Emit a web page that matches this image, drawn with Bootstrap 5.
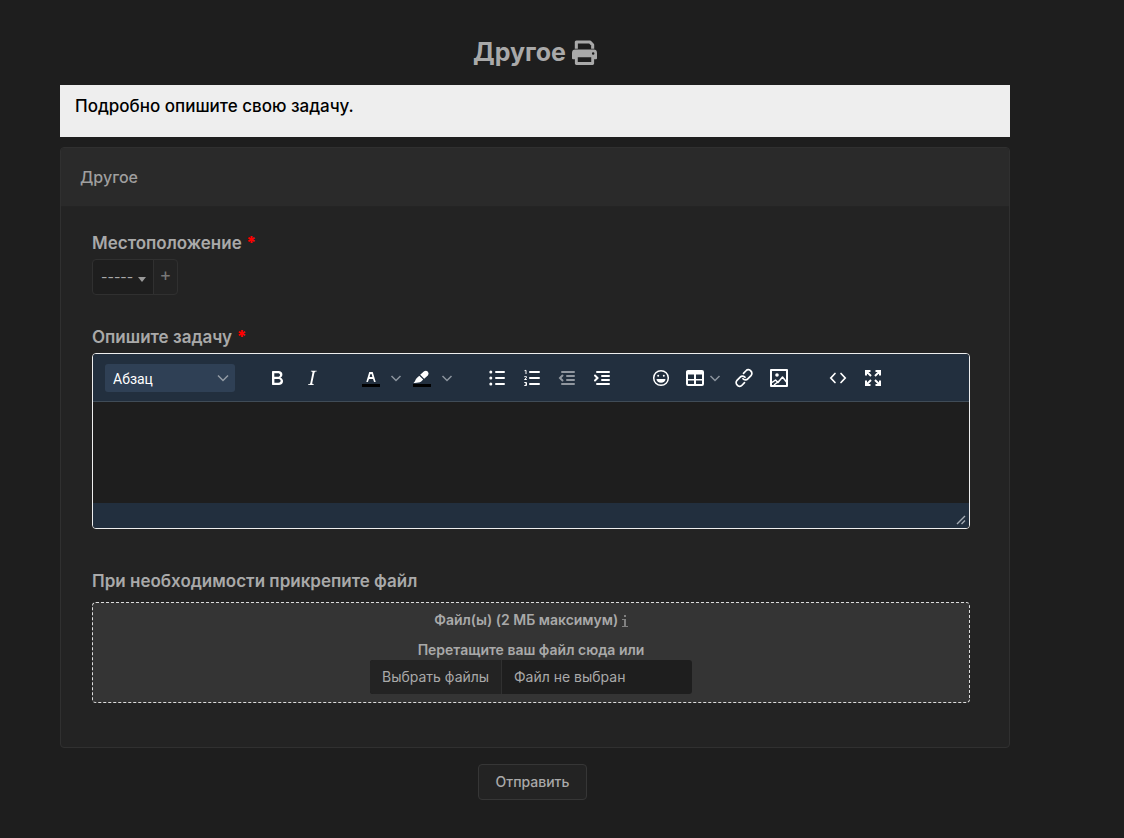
<!DOCTYPE html>
<html lang="ru" data-bs-theme="dark">
<head>
<meta charset="utf-8">
<meta name="viewport" content="width=device-width, initial-scale=1">
<title>Другое</title>
<link href="https://cdn.jsdelivr.net/npm/bootstrap@5.3.0/dist/css/bootstrap.min.css" rel="stylesheet">
<style>
body{background:#1e1e1e;color:#a9a9a9;font-family:Inter,"Liberation Sans",sans-serif;font-size:14px;line-height:20px}
.page-wrap{padding:36px 114px 36px 60px}
.page-title{color:#a9a9a9;font-size:25px;line-height:32px;font-weight:700;gap:6px;margin-bottom:17px}
.intro{background:#eee;color:#000;font-size:17px;line-height:24px;font-weight:500;padding:9px 15px 19px;margin-bottom:10px}
.form-card{--bs-card-bg:#232323;--bs-card-cap-bg:#2a2a2a;--bs-card-border-color:#303030;--bs-card-border-radius:4px;--bs-card-inner-border-radius:3px;--bs-card-color:#a9a9a9}
.form-card .card-header{font-size:16px;line-height:24px;font-weight:500;padding:17px 19px;border-bottom:1px solid #242424;color:#9f9f9f}
.form-card .card-body{padding:24px 39px 44px 31px}
.field-label{display:block;font-size:17px;line-height:24px;font-weight:600;margin-bottom:4px}
.files-label{margin-bottom:9px}
.req{color:#f00;font-weight:900}
.loc{margin-bottom:30px}
.loc-select{appearance:none;width:62px;height:36px;padding:0 8px;color:#a9a9a9;font-size:14px;border:1px solid #303030;border-radius:4px 0 0 4px;background:#1e1e1e url("data:image/svg+xml,%3Csvg xmlns='http://www.w3.org/2000/svg' viewBox='0 0 8 5'%3E%3Cpath d='M0 0h8L4 5z' fill='%23999'/%3E%3C/svg%3E") no-repeat 45px 17px/8px 5px}
.loc-add{width:25px;height:36px;margin-left:-1px;padding:0 0 4px;color:#777;background:transparent;border:1px solid #303030;border-radius:0 4px 4px 0;font-size:18px;line-height:28px}
.editor{border:1px solid #eee;border-radius:4px;overflow:hidden;margin-bottom:40px}
.toolbar{background:#222f3e;border-bottom:1px solid #404c57;min-height:48px;padding:7px 12px 6px;gap:25px}
.group{display:flex;align-items:center;gap:1px}
.para{appearance:none;width:130px;height:28px;padding:2px 8px 0;border:0;border-radius:3px;color:#fff;font-family:Roboto,sans-serif;font-size:14px;background:#2f4055 url("data:image/svg+xml,%3Csvg xmlns='http://www.w3.org/2000/svg' viewBox='0 0 12 8'%3E%3Cpath d='M1 1.5l5 5 5-5' fill='none' stroke='%23939ba5' stroke-width='1.5'/%3E%3C/svg%3E") no-repeat 112px 10px/12px 8px}
.tool{width:34px;height:34px;padding:0;border:0;background:none;color:#fff;display:flex;align-items:center;justify-content:center}
.tool svg{width:24px;height:24px;display:block;flex-shrink:0}
.tool.more{width:16px;color:#8c949e;margin-left:-1px}
.tool.more svg{width:12px;height:8px}
.split-slim .tool{width:32px}
.split-slim .more{width:10px}
.split-slim{display:flex;margin-right:6px}
.tool:disabled{opacity:.5}
.edit-area{display:block;width:100%;height:101px;border:0;background:#1e1e1e;color:#ddd;resize:none;padding:12px;outline:0}
.status{background:#222f3e;height:25px;padding:0 3px 3px}
.drop{background:#343434;border:1px dashed #ddd;border-radius:4px;padding:7px 8px 8px;font-weight:600;text-align:center}
.drop-title{margin-bottom:10px}
.file-box{width:322px;height:34px;background:#1e1e1e;border-radius:3px;font-weight:400;overflow:hidden;text-align:left;line-height:34px;cursor:pointer}
.file-box .pick{background:#232323;border-right:1px solid #303030;padding:0 12px;width:132px;white-space:nowrap}
.send{--bs-btn-bg:#232323;--bs-btn-border-color:#363636;--bs-btn-color:#a9a9a9;--bs-btn-hover-bg:#2a2a2a;--bs-btn-hover-color:#ccc;font-size:14px;line-height:20px;font-weight:500;padding:7px 17px;border-radius:4px;margin:16px 5px 0 0}
</style>
</head>
<body>
<main class="page-wrap">
<h1 class="page-title d-flex justify-content-center align-items-center">Другое
<a href="#" class="text-reset d-flex" aria-label="Печать"><svg width="25" height="25" viewBox="0 0 26 26" fill="none"><path d="M4.500 9V2h14l3 3v4" stroke="currentColor" stroke-width="3.200" stroke-linejoin="round"/><path fill="currentColor" fill-rule="evenodd" d="M3.500 10h19a3.500 3.500 0 0 1 3.500 3.500V19a1 1 0 0 1-1 1h-2v4.500a1.500 1.500 0 0 1-1.500 1.500h-17A1.500 1.500 0 0 1 3 24.500V20H1a1 1 0 0 1-1-1v-5.500A3.500 3.500 0 0 1 3.500 10zM6 18v5h14v-5zM22 12.800a1.300 1.300 0 1 0 0 2.600 1.300 1.300 0 0 0 0-2.600z"/></svg></a></h1>
<div class="intro">Подробно опишите свою задачу.</div>
<form>
<section class="card form-card">
<div class="card-header">Другое</div>
<div class="card-body">
<div class="loc">
<label class="field-label" for="loc">Местоположение <span class="req">*</span></label>
<div class="d-flex"><select id="loc" class="loc-select"><option>-----</option></select><button type="button" class="loc-add" aria-label="Добавить">+</button></div>
</div>
<label class="field-label" for="task">Опишите задачу <span class="req">*</span></label>
<div class="editor">
<div class="toolbar d-flex flex-wrap align-items-center" role="toolbar">
<select class="para" aria-label="Формат"><option>Абзац</option></select>
<div class="group">
<button type="button" class="tool" aria-label="Полужирный"><svg viewBox="0 0 24 24" fill="currentColor"><path d="M7.800 19c-.3 0-.5 0-.6-.2l-.2-.5V5.700c0-.2 0-.4.2-.5l.6-.2h5c1.500 0 2.700.3 3.500 1 .7.6 1.100 1.400 1.100 2.500a3 3 0 0 1-.6 1.900c-.4.6-1 1-1.600 1.200.4.1.9.3 1.300.6s.8.7 1 1.200c.4.4.5 1 .5 1.600 0 1.300-.4 2.300-1.300 3-.8.7-2.100 1-3.800 1H7.800zm5-8.300c.6 0 1.200-.1 1.600-.5.4-.3.6-.7.6-1.300 0-1.100-.8-1.700-2.300-1.700H9.300v3.500h3.400zm.5 6c.7 0 1.300-.1 1.700-.4.4-.4.6-.9.6-1.500s-.2-1-.7-1.400c-.4-.3-1-.4-2-.4H9.400v3.800h4z"/></svg></button>
<button type="button" class="tool" aria-label="Курсив"><svg viewBox="0 0 24 24" fill="currentColor"><path d="m16.700 4.700-.1.9h-.3c-.6 0-1 0-1.400.3-.3.3-.4.6-.5 1.100l-2.100 9.800v.6c0 .5.4.8 1.400.8h.2l-.2.8H8l.2-.8h.2c1.100 0 1.800-.5 2-1.500l2-9.800.1-.5c0-.6-.4-.8-1.400-.8h-.3l.2-.9h5.800z"/></svg></button>
</div>
<div class="group">
<button type="button" class="tool" aria-label="Цвет текста"><svg viewBox="0 0 24 24" fill="currentColor"><path fill="#000" d="M3 18h18v3H3z"/><path d="M8.700 16h-.8a.5.5 0 0 1-.5-.6l2.700-9c.1-.3.3-.4.5-.4h2.800c.2 0 .4.1.5.4l2.700 9a.5.5 0 0 1-.5.6h-.8a.5.5 0 0 1-.4-.4l-.7-2.200c0-.3-.3-.4-.5-.4h-3.400c-.2 0-.4.1-.5.4l-.7 2.200c0 .3-.2.4-.4.4zm2.600-7.600-.6 2a.5.5 0 0 0 .5.6h1.600a.5.5 0 0 0 .5-.6l-.6-2c0-.3-.3-.4-.5-.4h-.4c-.2 0-.4.1-.5.4z"/></svg></button>
<button type="button" class="tool more" aria-label="Выбрать цвет текста"><svg viewBox="0 0 12 8" fill="none" stroke="currentColor" stroke-width="1.500"><path d="M1.500 2 6 6.500 10.500 2"/></svg></button>
<button type="button" class="tool" aria-label="Цвет фона"><svg viewBox="0 0 24 24" fill="currentColor"><path fill="#000" d="M3 18h18v3H3z"/><path d="M3.500 16.900c1.600-1 1.700-3.200 3.300-4.900l2.500-2.300 3.900 3.900-2 2c-1.800 1.400-4.500 1.300-7.700 1.300z"/><path d="m10.200 8.800 3.900-3.600a2.900 2.900 0 0 1 4 4l-3.900 3.600z"/></svg></button>
<button type="button" class="tool more" aria-label="Выбрать цвет фона"><svg viewBox="0 0 12 8" fill="none" stroke="currentColor" stroke-width="1.500"><path d="M1.500 2 6 6.500 10.500 2"/></svg></button>
</div>
<div class="group">
<button type="button" class="tool" aria-label="Маркированный список"><svg viewBox="0 0 24 24" fill="currentColor"><path d="M11 5h8a1 1 0 0 1 0 2h-8a1 1 0 0 1 0-2zm0 6h8a1 1 0 0 1 0 2h-8a1 1 0 0 1 0-2zm0 6h8a1 1 0 0 1 0 2h-8a1 1 0 0 1 0-2z"/><circle cx="5.800" cy="6" r="1.500"/><circle cx="5.800" cy="12" r="1.500"/><circle cx="5.800" cy="18" r="1.500"/></svg></button>
<button type="button" class="tool" aria-label="Нумерованный список"><svg viewBox="0 0 24 24" fill="currentColor"><path d="M10 5h9a1 1 0 0 1 0 2h-9a1 1 0 0 1 0-2zm0 6h9a1 1 0 0 1 0 2h-9a1 1 0 0 1 0-2zm0 6h9a1 1 0 0 1 0 2h-9a1 1 0 0 1 0-2z"/><path fill="none" stroke="currentColor" stroke-width="1" d="M4.500 4.700 6 4.300V8M4.300 10.700h2.200v1L4.500 13.500h2.300M4.300 16.500h2.200v3H4.300M5 18h1.500"/></svg></button>
<button type="button" class="tool" disabled aria-label="Уменьшить отступ"><svg viewBox="0 0 24 24" fill="none" stroke="currentColor" stroke-width="2" stroke-linecap="round"><path d="M7 6h12M12 10h7M12 14h7M7 18h12M7.500 9.500 5 12l2.500 2.500"/></svg></button>
<button type="button" class="tool" aria-label="Увеличить отступ"><svg viewBox="0 0 24 24" fill="none" stroke="currentColor" stroke-width="2" stroke-linecap="round"><path d="M7 6h12M12 10h7M12 14h7M7 18h12M5 9.500 7.500 12 5 14.500"/></svg></button>
</div>
<div class="group">
<button type="button" class="tool" aria-label="Смайлики"><svg viewBox="0 0 24 24" fill="none" stroke="currentColor"><circle cx="12" cy="12" r="7.300" stroke-width="1.500"/><circle cx="9.200" cy="9.800" r="1" fill="currentColor" stroke="none"/><circle cx="14.800" cy="9.800" r="1" fill="currentColor" stroke="none"/><path d="M7.500 13h9a4.500 3.800 0 0 1-9 0z" fill="currentColor" stroke="none"/></svg></button>
<div class="split-slim">
<button type="button" class="tool" aria-label="Таблица"><svg viewBox="0 0 24 24" fill="currentColor"><path fill-rule="evenodd" d="M5 4h14a2 2 0 0 1 2 2v12a2 2 0 0 1-2 2H5a2 2 0 0 1-2-2V6c0-1.100.9-2 2-2zm0 4.500V13h6V8.500zm8 0V13h6V8.500zM5 14.500V18h6v-3.500zm8 0V18h6v-3.500z"/></svg></button>
<button type="button" class="tool more" aria-label="Параметры таблицы"><svg viewBox="0 0 12 8" fill="none" stroke="currentColor" stroke-width="1.500"><path d="M1.500 2 6 6.500 10.500 2"/></svg></button>
</div>
<button type="button" class="tool" aria-label="Ссылка"><svg viewBox="0 0 24 24" fill="none" stroke="currentColor" stroke-width="1.700" stroke-linecap="round"><path d="M11.500 7.300 14 4.800a3 3 0 0 1 4.800.2 3.300 3.300 0 0 1 .2 4.700l-3.200 3.200a3.200 3.200 0 0 1-4.800-.2M12.500 16.700 10 19.200a3 3 0 0 1-4.800-.2 3.300 3.300 0 0 1-.2-4.700l3.200-3.200a3.200 3.200 0 0 1 4.800.2"/></svg></button>
<button type="button" class="tool" aria-label="Изображение"><svg viewBox="0 0 24 24" fill="none" stroke="currentColor" stroke-width="1.500" stroke-linejoin="round"><path stroke-width="2" d="M4 4h16v16H4z"/><path d="m5 16.500 3.500-2.500 2.500 2.500 4.500-5.500 4 5M7 19l5-4"/><circle cx="10" cy="9" r="1.800" fill="currentColor" stroke="none"/></svg></button>
</div>
<div class="group">
<button type="button" class="tool" aria-label="Исходный код"><svg viewBox="0 0 24 24" fill="none" stroke="currentColor" stroke-width="1.700" stroke-linecap="round"><path d="m9 7.500L4.800 12 9 16.500M15 7.500l4.200 4.500-4.200 4.500"/></svg></button>
<button type="button" class="tool" aria-label="Полноэкранный режим"><svg viewBox="0 0 24 24" fill="none" stroke="currentColor" stroke-width="2"><path d="M5 9.500V5h4.500M5 5l5 5M14.500 5H19v4.500M19 5l-5 5M5 14.500V19h4.500M5 19l5-5M19 14.500V19h-4.500M19 19l-5-5"/></svg></button>
</div>
</div>
<textarea id="task" class="edit-area"></textarea>
<div class="status d-flex justify-content-end align-items-end"><svg width="10" height="10" viewBox="0 0 10 10" fill="none" stroke="#a5acb4" stroke-width="1.400"><path d="M1 9 9 1M5.500 9 9 5.500"/></svg></div>
</div>
<label class="field-label files-label" for="files">При необходимости прикрепите файл</label>
<div class="drop">
<div class="drop-title">Файл(ы) (2 МБ максимум) <svg width="6" height="13" viewBox="0 0 6 13" fill="#808080"><path d="M2 0h2v2H2zM0 4h4v7h2v1H0v-1h2V5H0z"/></svg></div>
<div>Перетащите ваш файл сюда или</div>
<label class="file-box d-inline-flex align-top"><input id="files" type="file" class="visually-hidden" multiple><span class="pick">Выбрать файлы</span><span class="ps-2 ms-1">Файл не выбран</span></label>
</div>
</div>
</section>
<div class="text-center"><button type="submit" class="btn send">Отправить</button></div>
</form>
</main>
<script src="https://cdn.jsdelivr.net/npm/bootstrap@5.3.0/dist/js/bootstrap.bundle.min.js"></script>
</body>
</html>
